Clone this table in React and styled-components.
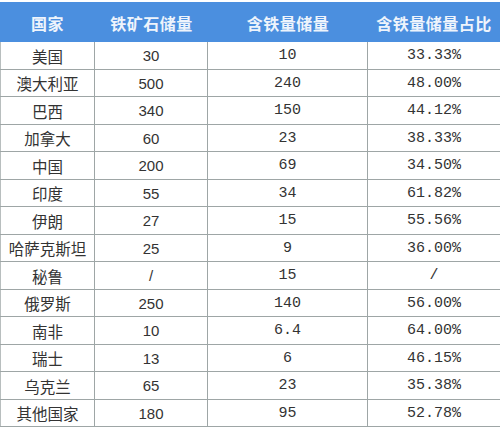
import styled, { createGlobalStyle } from "styled-components";

const GlobalStyle = createGlobalStyle`
    html, body {
        margin: 0;
        padding: 0;
        background: #fff;
    }
`;

const cols = '95px 113px 160px 132px';

const Sheet = styled.div`
    width: 500px;
    padding-top: 2px;
    font-family: "Noto Sans CJK SC", "Noto Sans", sans-serif;
    color: #333;
`;

const HeadRow = styled.div`
    display: grid;
    grid-template-columns: ${cols};
    height: 40px;
    background: #4b8fdf;
`;

const HeadCell = styled.div`
    display: flex;
    align-items: center;
    justify-content: center;
    color: #eef4fc;
    font-size: 16px;
    font-weight: 700;
    letter-spacing: 0.5px;
    padding-top: 2px;
`;

const Row = styled.div`
    display: grid;
    grid-template-columns: ${cols};
    height: 27.5px;
    box-sizing: border-box;
    border-bottom: 1px solid #9ea6a6;
`;

const Cell = styled.div`
    display: flex;
    align-items: center;
    justify-content: center;
    box-sizing: border-box;
    border-right: ${props => props.last ? 'none' : '1px solid #9ea6a6'};
    border-left: ${props => props.first ? '1px solid #b8bebe' : 'none'};
    font-size: ${props => props.first ? '15.5px' : '15px'};
    font-family: ${props =>
        props.mono ? '"Liberation Mono", "Noto Sans CJK SC", monospace'
        : props.num ? '"Liberation Sans", "Noto Sans CJK SC", sans-serif'
        : '"Noto Sans CJK SC", sans-serif'};
    padding-top: 1px;
`;

const headers = ['国家', '铁矿石储量', '含铁量储量', '含铁量储量占比'];

const data = [
    ['美国', '30', '10', '33.33%'],
    ['澳大利亚', '500', '240', '48.00%'],
    ['巴西', '340', '150', '44.12%'],
    ['加拿大', '60', '23', '38.33%'],
    ['中国', '200', '69', '34.50%'],
    ['印度', '55', '34', '61.82%'],
    ['伊朗', '27', '15', '55.56%'],
    ['哈萨克斯坦', '25', '9', '36.00%'],
    ['秘鲁', '/', '15', '/'],
    ['俄罗斯', '250', '140', '56.00%'],
    ['南非', '10', '6.4', '64.00%'],
    ['瑞士', '13', '6', '46.15%'],
    ['乌克兰', '65', '23', '35.38%'],
    ['其他国家', '180', '95', '52.78%'],
];

const App = () => {
    return (
        <>
            <GlobalStyle />
            <Sheet>
                <HeadRow>
                    {headers.map(h => <HeadCell key={h}>{h}</HeadCell>)}
                </HeadRow>
                {data.map(r => (
                    <Row key={r[0]}>
                        <Cell first>{r[0]}</Cell>
                        <Cell num>{r[1]}</Cell>
                        <Cell mono>{r[2]}</Cell>
                        <Cell mono last>{r[3]}</Cell>
                    </Row>
                ))}
            </Sheet>
        </>
    );
}

export default App;
